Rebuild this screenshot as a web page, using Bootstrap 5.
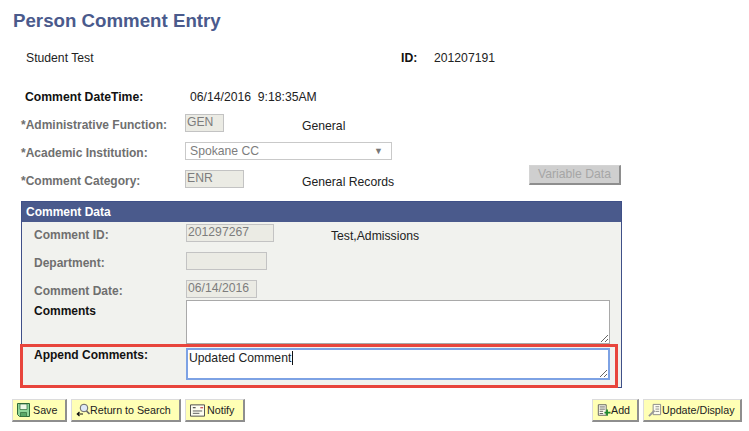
<!DOCTYPE html>
<html lang="en">
<head>
  <meta charset="UTF-8"/>
  <meta name="viewport" content="width=device-width, initial-scale=1.0"/>
  <title>Person Comment Entry</title>
  <link href="https://cdn.jsdelivr.net/npm/bootstrap@5.3.0/dist/css/bootstrap.min.css" rel="stylesheet"/>
  <style>
    body {
      font-family: "Liberation Sans", Arial, sans-serif;
      font-size: 12.2px;
      color: #222;
      background: #fff;
      overflow: hidden;
    }
    .page-title {
      font-size: 18.7px;
      font-weight: 700;
      color: #4a5a8c;
      margin: 0;
      padding: 10px 0 0 13px;
      line-height: 21px;
      height: 46px;
    }
    .top-row {
      display: flex;
      align-items: center;
      height: 24px;
      padding-left: 26px;
    }
    .date-row {
      display: flex;
      align-items: center;
      height: 18px;
      margin-top: 18px;
      padding-left: 25px;
    }
    .form-line {
      display: flex;
      align-items: flex-start;
      height: 18px;
      margin-top: 10px;
      padding-left: 21px;
    }
    .form-line.first-line { margin-top: 8px; }
    .strong-label { font-weight: 700; color: #111; }
    .dim-label {
      font-size: 12px;
      font-weight: 700;
      color: #6f6f6f;
      width: 164px;
      flex: none;
      line-height: 14px;
      padding-top: 4px;
    }
    .side-text { line-height: 14px; padding-top: 5px; flex: none; }
    .ps-input {
      height: 18px;
      border: 1px solid #c3c3c3;
      background: #ebebe4;
      color: #7d7d7d;
      line-height: 14px;
      padding: 0 1px;
      flex: none;
    }
    .ps-select {
      width: 207px;
      height: 18px;
      border: 1px solid #c9c9c9;
      background: #fff;
      color: #7d7d7d;
      padding: 0 4px;
      line-height: 16px;
      flex: none;
    }
    .select-arrow { color: #777; font-size: 9px; }
    .btn.disabled-btn:disabled {
      margin: -5px 128px 0 auto;
      width: 92px;
      height: 20px;
      padding: 0 0 1px;
      font-size: 12.2px;
      line-height: 16px;
      color: #a6a6a6;
      background: #cfcfcf;
      border: 1px solid #d4d4d4;
      border-right: 2px solid #8e8e8e;
      border-bottom: 2px solid #8e8e8e;
      border-radius: 0;
      opacity: 1;
    }
    .data-panel {
      position: relative;
      width: 601px;
      height: 187px;
      margin: 13px 0 0 21px;
      background: #f1f2ee;
      border: 1px solid #3f5088;
    }
    .panel-head {
      height: 20px;
      background: #4a5a8c;
      color: #fff;
      font-size: 12px;
      font-weight: 700;
      line-height: 20px;
      padding-left: 4px;
      margin-bottom: 2px;
    }
    .panel-line {
      display: flex;
      align-items: flex-start;
      height: 18px;
      margin-bottom: 10px;
      padding-left: 12px;
    }
    .panel-label {
      width: 152px;
      flex: none;
      font-size: 12px;
      font-weight: 700;
      color: #6f6f6f;
      line-height: 14px;
      padding-top: 4px;
    }
    .text-row {
      display: flex;
      padding-left: 12px;
    }
    .text-label { width: 152px; flex: none; font-size: 12px; font-weight: 700; color: #111; line-height: 14px; }
    .area-wrap { position: relative; }
    .ps-area {
      display: block;
      width: 424px;
      font-size: 12.2px;
      line-height: 14px;
      font-family: inherit;
      color: #222;
      background: #fff;
      border-radius: 0;
      resize: both;
      outline: 0;
    }
    .area-plain { height: 44px; border: 1px solid #a9a9a9; padding: 2px 3px; }
    .area-focus { height: 32px; border: 2px solid #7da2e4; padding: 1px; }
    .text-caret {
      position: absolute;
      left: 106px;
      top: 3px;
      width: 1px;
      height: 14px;
      background: #111;
    }
    .red-box {
      position: absolute;
      left: -2px;
      top: 142px;
      width: 598px;
      height: 44px;
      border: 3px solid #e8453c;
      pointer-events: none;
    }
    .action-row {
      display: flex;
      justify-content: space-between;
      padding: 11px 7px 0 12px;
    }
    .btn.ps-btn {
      display: inline-flex;
      align-items: center;
      height: 23px;
      padding: 0 0 0 4px;
      font-size: 10.7px;
      color: #222;
      background: #ffffb5;
      border: 1px solid #dcdcdc;
      border-right: 2px solid #8e8e8e;
      border-bottom: 2px solid #8e8e8e;
      border-radius: 0;
      line-height: 1;
      white-space: nowrap;
    }
    .ps-btn svg { flex: none; }
  </style>
</head>
<body>
  <h1 class="page-title">Person Comment Entry</h1>

  <div class="top-row">
    <span style="width:375px">Student Test</span>
    <span class="strong-label" style="width:33px">ID:</span>
    <span>201207191</span>
  </div>

  <div class="date-row">
    <span class="strong-label" style="width:165px">Comment DateTime:</span>
    <span>06/14/2016&nbsp; 9:18:35AM</span>
  </div>

  <div class="form-line first-line">
    <span class="dim-label">*Administrative Function:</span>
    <span class="ps-input" style="width:39px">GEN</span>
    <span class="side-text" style="margin-left:78px">General</span>
  </div>
  <div class="form-line">
    <span class="dim-label">*Academic Institution:</span>
    <span class="ps-select d-flex justify-content-between align-items-center">Spokane CC<span class="select-arrow me-1">&#9660;</span></span>
  </div>
  <div class="form-line">
    <span class="dim-label">*Comment Category:</span>
    <span class="ps-input" style="width:59px">ENR</span>
    <span class="side-text" style="margin-left:58px">General Records</span>
    <button type="button" class="btn disabled-btn" disabled>Variable Data</button>
  </div>

  <div class="data-panel">
    <div class="panel-head">Comment Data</div>
    <div class="panel-line">
      <span class="panel-label">Comment ID:</span>
      <span class="ps-input" style="width:88px">201297267</span>
      <span class="side-text" style="margin-left:57px">Test,Admissions</span>
    </div>
    <div class="panel-line">
      <span class="panel-label">Department:</span>
      <span class="ps-input" style="width:81px"></span>
    </div>
    <div class="panel-line" style="margin-bottom:2px">
      <span class="panel-label">Comment Date:</span>
      <span class="ps-input" style="width:71px">06/14/2016</span>
    </div>
    <div class="text-row">
      <span class="text-label pt-1">Comments</span>
      <textarea class="ps-area area-plain"></textarea>
    </div>
    <div class="text-row" style="margin-top:4px">
      <span class="text-label">Append Comments:</span>
      <div class="area-wrap">
        <textarea class="ps-area area-focus">Updated Comment</textarea>
        <span class="text-caret"></span>
      </div>
    </div>
    <div class="red-box"></div>
  </div>

  <div class="action-row">
    <div class="d-flex gap-1">
      <button type="button" class="btn ps-btn" style="width:55px">
        <svg width="13" height="14" viewBox="0 0 13 14"><path d="M.5.5h12v13h-10l-2-2z" fill="#8fd69a" stroke="#2f6b3a"/><path d="M3 1h7v5.5H3z" fill="#eef8e6" stroke="#2f6b3a" stroke-width=".7"/><path d="M3.5 9.5h6v4h-6z" fill="#5aa868" stroke="#2f6b3a" stroke-width=".7"/></svg>
        <span style="margin-left:3px">Save</span>
      </button>
      <button type="button" class="btn ps-btn" style="width:110px">
        <svg width="14" height="15" viewBox="0 0 14 15"><circle cx="8" cy="5" r="3.8" fill="#dfe9f8" stroke="#666"/><path d="M10.5 8l3 3" stroke="#666" stroke-width="1.6"/><path d="M7 11H1.5M3.5 9l-2.2 2 2.2 2" fill="none" stroke="#111" stroke-width="1.2"/></svg>
        <span>Return to Search</span>
      </button>
      <button type="button" class="btn ps-btn" style="width:60px">
        <svg width="15" height="13" viewBox="0 0 16 13"><path d="M.5.5h15v12H.5z" fill="#fdfdf0" stroke="#444"/><path d="M3 3.5h3" stroke="#444" stroke-width="1.2"/><path d="M11 3.5h3" stroke="#c55" stroke-width="1.4"/><path d="M3 7h10M3 9.5h7" stroke="#555"/></svg>
        <span style="margin-left:2px">Notify</span>
      </button>
    </div>
    <div class="d-flex gap-1">
      <button type="button" class="btn ps-btn" style="width:47px">
        <svg width="14" height="14" viewBox="0 0 16 15"><path d="M1.5 1.5h9v12h-9z" fill="#fdfdf0" stroke="#555"/><path d="M3 4h6M3 6.5h6M3 9h4M3 11.5h4" stroke="#555"/><path d="M11.5 7v7M8.5 10.5h7" stroke="#1e8a2c" stroke-width="2"/></svg>
        <span>Add</span>
      </button>
      <button type="button" class="btn ps-btn" style="width:99px">
        <svg width="14" height="14" viewBox="0 0 15 15"><path d="M5.5 1.5h8v11h-8z" fill="#fdfdf0" stroke="#888"/><path d="M8 4h4M8 6.5h4M8 9h4" stroke="#888"/><path d="M1 14l6-6" stroke="#999" stroke-width="2"/></svg>
        <span>Update/Display</span>
      </button>
    </div>
  </div>
</body>
</html>
